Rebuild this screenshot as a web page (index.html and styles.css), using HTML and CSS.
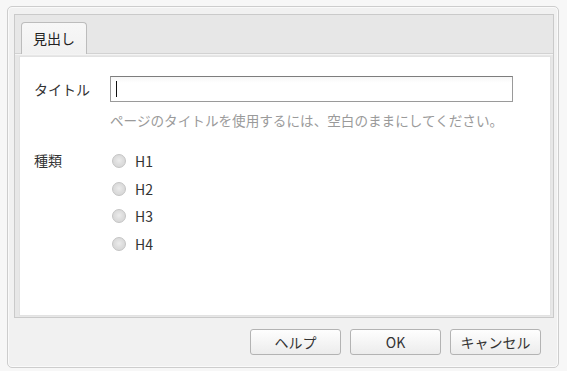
FILE: index.html
```html
<!DOCTYPE html>
<html lang="ja">
<head>
    <meta charset="UTF-8">
    <meta name="viewport" content="width=device-width, initial-scale=1.0">
    <title>見出し</title>
    <link rel="stylesheet" href="styles.css">
</head>
<body>
    <div class="dialog">
        <div class="panel">
            <div class="tabs">
                <div class="tab">見出し</div>
            </div>
            <div class="content">
                <div class="row">
                    <label class="label" for="title">タイトル</label>
                    <div class="field">
                        <div class="input-wrap">
                            <input id="title" class="text-input" type="text">
                        </div>
                        <p class="hint">ページのタイトルを使用するには、空白のままにしてください。</p>
                    </div>
                </div>
                <div class="row type-row">
                    <span class="label">種類</span>
                    <div class="field radios">
                        <label class="radio"><span class="dot"></span>H1</label>
                        <label class="radio"><span class="dot"></span>H2</label>
                        <label class="radio"><span class="dot"></span>H3</label>
                        <label class="radio"><span class="dot"></span>H4</label>
                    </div>
                </div>
            </div>
        </div>
        <div class="footer">
            <button class="btn">ヘルプ</button>
            <button class="btn">OK</button>
            <button class="btn">キャンセル</button>
        </div>
    </div>
</body>
</html>
```

FILE: styles.css
```css
* {
    margin: 0;
    padding: 0;
    box-sizing: border-box;
}

body {
    font-family: "Noto Sans CJK JP", "Noto Sans", sans-serif;
    font-size: 14px;
    color: #333;
    background: #f7f7f7;
    padding: 6px 0 0 7px;
}

.dialog {
    width: 552px;
    height: 362px;
    background: #f1f1f1;
    border: 1px solid #cdcdcd;
    border-radius: 5px;
    box-shadow: inset 0 0 0 1px #fafafa;
    padding: 7px 4px 0 6px;
}

.panel {
    height: 304px;
    border: 1px solid #cacaca;
    background: #e7e7e7;
    padding: 0 2px 1px 4px;
    display: flex;
    flex-direction: column;
}

.tabs {
    height: 39px;
    margin-left: -4px;
    margin-right: -2px;
    padding: 7px 0 0 6px;
    border-bottom: 1px solid #d2d2d2;
    box-shadow: 0 1px 0 #f4f4f4;
    margin-bottom: 2px;
    display: flex;
}

.tab {
    width: 66px;
    height: 32px;
    border: 1px solid #bcbcbc;
    border-bottom: none;
    border-radius: 4px 4px 0 0;
    background: linear-gradient(#f7f7f7, #f1f1f1);
    padding-left: 11px;
    line-height: 30px;
    font-size: 14px;
    color: #222;
}

.content {
    flex: 1;
    background: #fff;
    border: 1px solid #e2e2e2;
    padding: 19px 0 0 14px;
}

.row {
    display: flex;
}

.label {
    width: 76px;
    flex-shrink: 0;
    line-height: 26px;
    color: #333;
}

.input-wrap {
    position: relative;
    width: 403px;
}

.input-wrap::after {
    content: "";
    position: absolute;
    left: 6px;
    top: 5px;
    width: 1px;
    height: 16px;
    background: #111;
}

.text-input {
    display: block;
    width: 403px;
    height: 26px;
    border: 1px solid #9a9a9a;
    border-top-color: #7d7d7d;
    background: linear-gradient(#f6f6f6, #fff 6px);
    font: inherit;
    outline: none;
}

.hint {
    margin-top: 9px;
    font-size: 13.6px;
    line-height: 18px;
    color: #9a9a9a;
    white-space: nowrap;
}

.type-row {
    margin-top: 18px;
}

.type-row .label {
    line-height: 27.7px;
}

.radios {
    display: flex;
    flex-direction: column;
    padding-left: 2px;
}

.radio {
    display: flex;
    align-items: center;
    gap: 9px;
    height: 27.7px;
    color: #333;
}

.dot {
    width: 14px;
    height: 14px;
    border-radius: 50%;
    border: 1px solid #c4c4c4;
    background: radial-gradient(circle at 50% 45%, #ececec 0, #dedede 45%, #d3d3d3 100%);
}

.footer {
    display: flex;
    justify-content: flex-end;
    gap: 9px;
    padding: 11px 13px 0 0;
}

.btn {
    width: 91px;
    height: 26px;
    border: 1px solid #b3b3b3;
    border-radius: 3px;
    background: linear-gradient(#fefefe, #ececec);
    font: inherit;
    font-size: 14px;
    color: #333;
    cursor: pointer;
}
```
